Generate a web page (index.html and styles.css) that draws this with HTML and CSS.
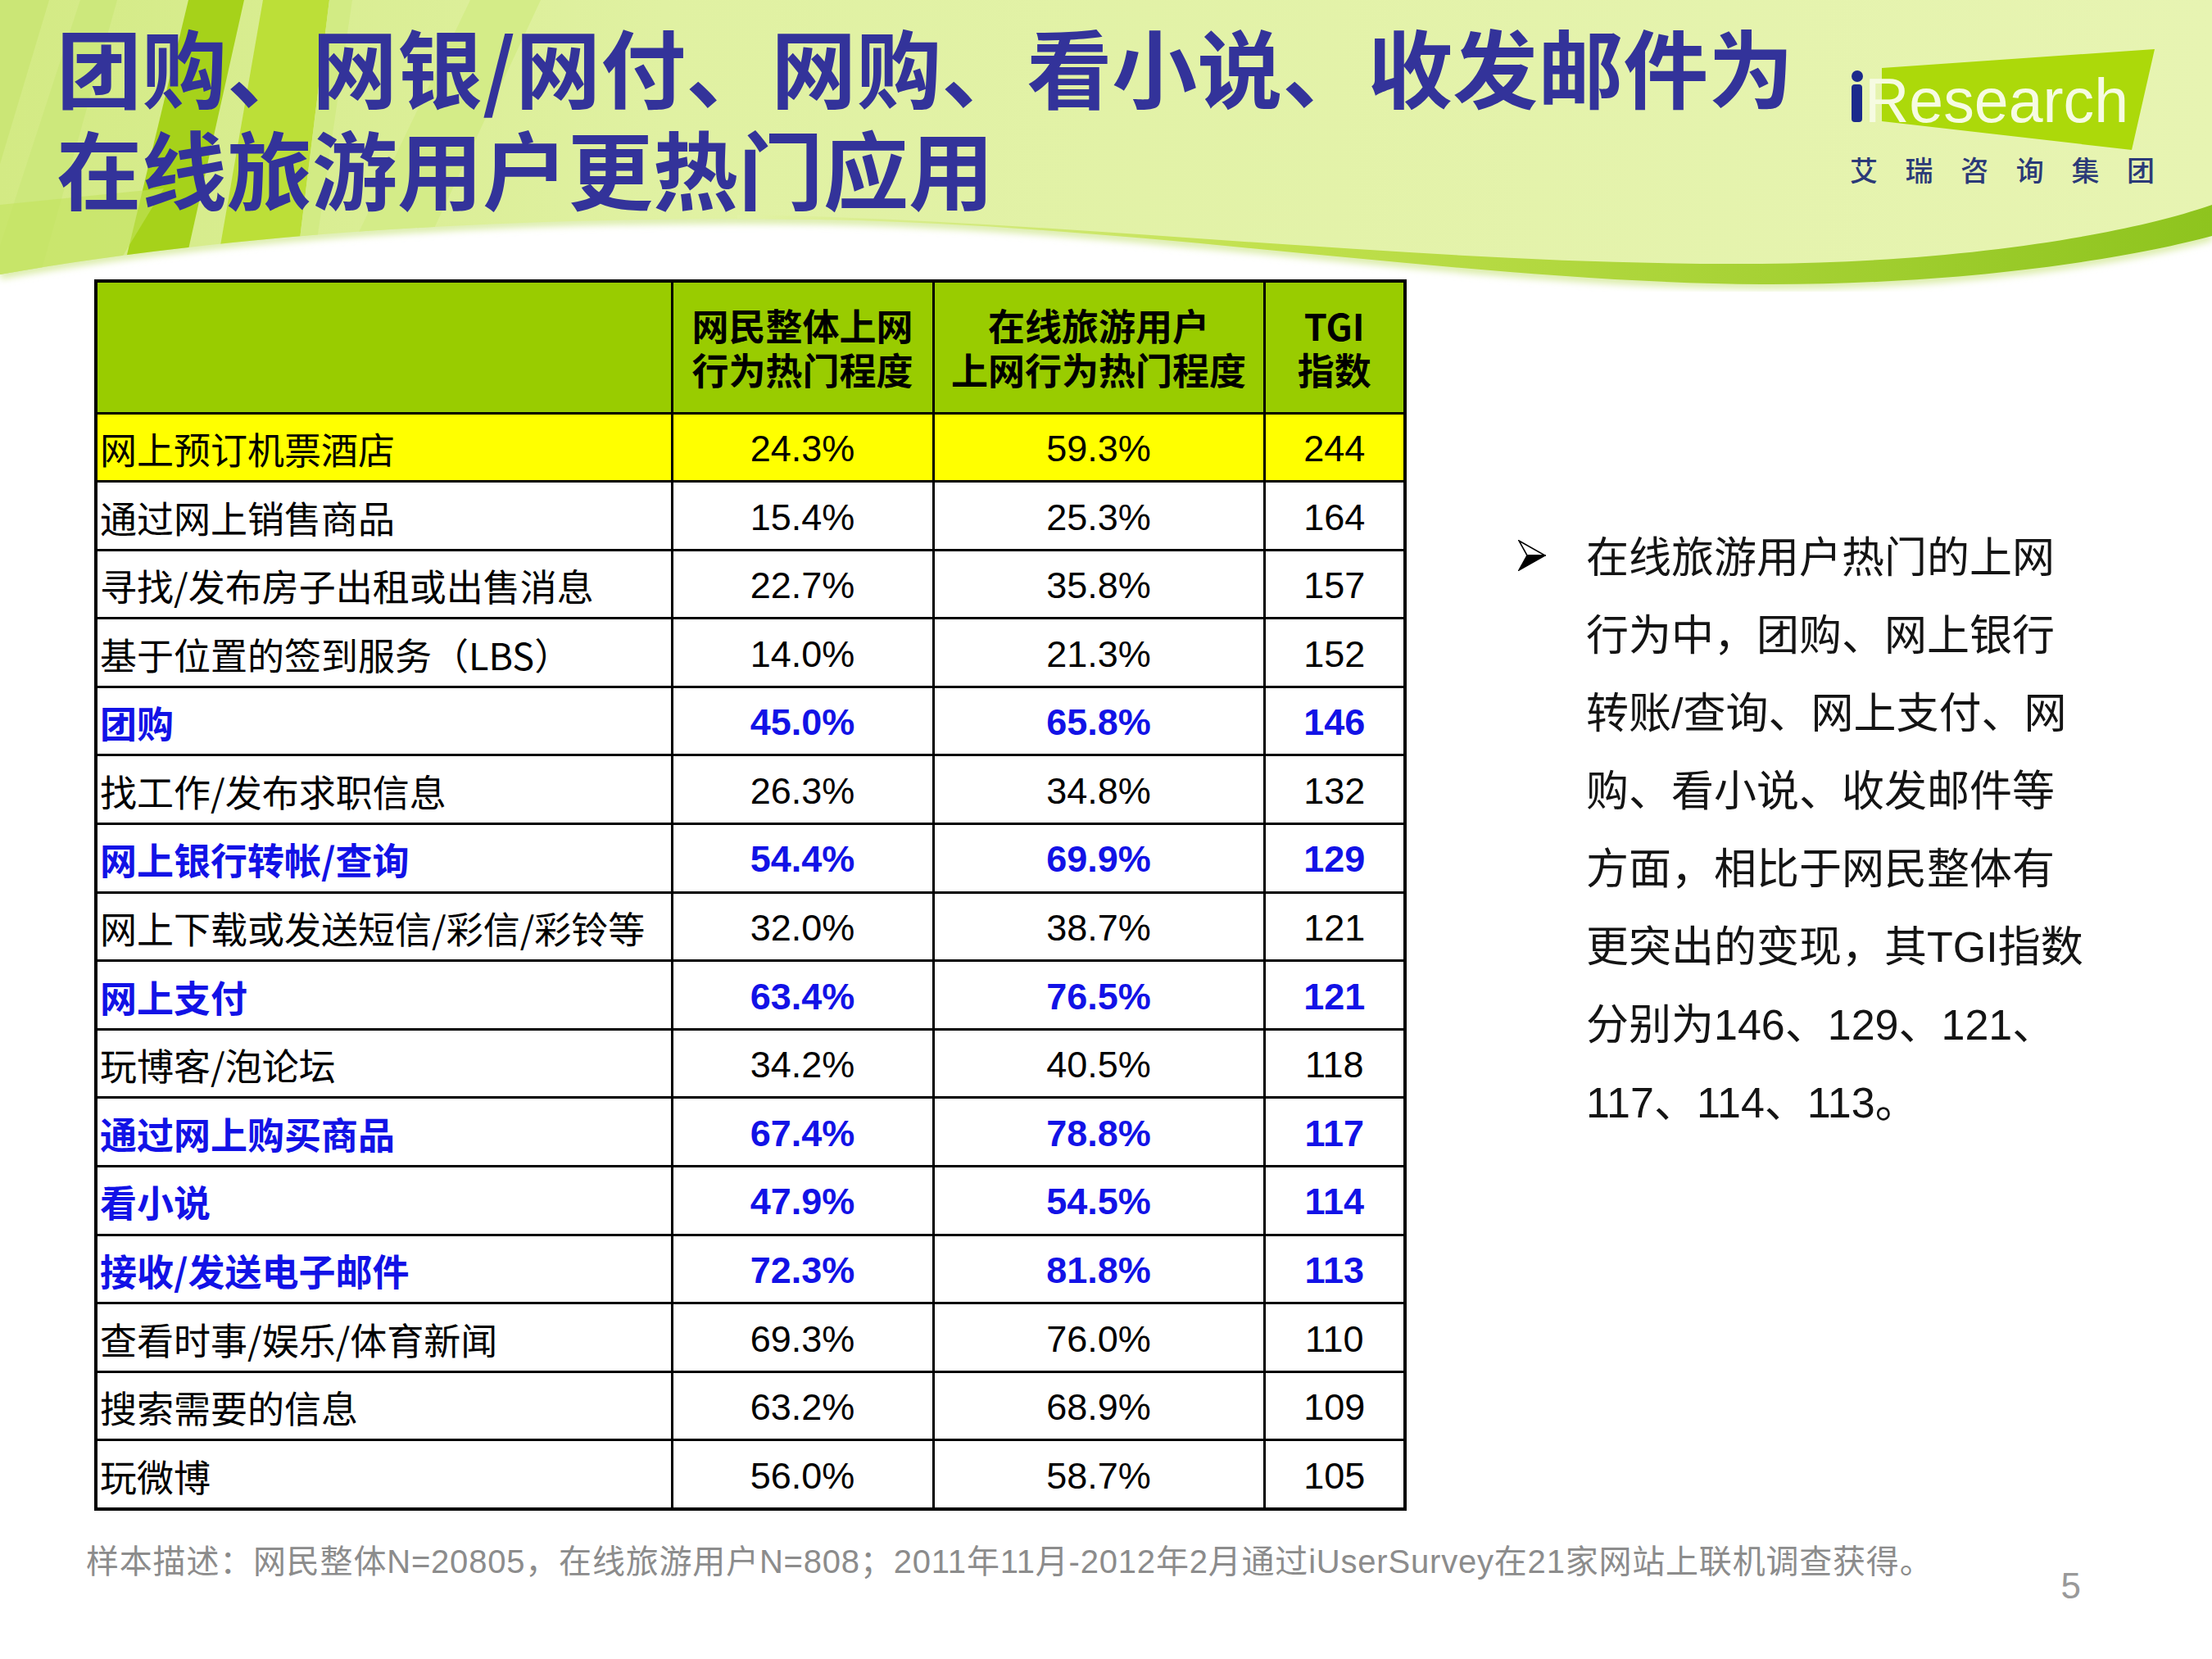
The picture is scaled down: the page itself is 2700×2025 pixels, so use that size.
FILE: index.html
```html
<!DOCTYPE html>
<html lang="zh-CN">
<head>
<meta charset="utf-8">
<title>团购、网银/网付、网购、看小说、收发邮件为在线旅游用户更热门应用</title>
<link rel="stylesheet" href="styles.css">
</head>
<body>
<div class="page">
  <svg class="bg" viewBox="0 0 2700 380" width="2700" height="380" aria-hidden="true">
    <defs>
      <linearGradient id="sky" x1="0" y1="0" x2="1" y2="0">
        <stop offset="0" stop-color="#d3ea84"/>
        <stop offset="0.3" stop-color="#e0f1a2"/>
        <stop offset="1" stop-color="#e7f4b2"/>
      </linearGradient>
      <linearGradient id="band" x1="900" y1="0" x2="2700" y2="0" gradientUnits="userSpaceOnUse">
        <stop offset="0" stop-color="#e2f2a6"/>
        <stop offset="0.35" stop-color="#c2e14e"/>
        <stop offset="1" stop-color="#8ec41e"/>
      </linearGradient>
      <clipPath id="sk">
        <path d="M0,0 H2700 V288 C2600,315 2400,348 2150,347 C1800,345 1400,275 1000,268 C600,262 250,290 0,335 Z"/>
      </clipPath>
      <filter id="soft"><feGaussianBlur stdDeviation="5"/></filter>
    </defs>
    <path d="M0,335 C250,290 600,262 1000,268 C1400,275 1800,345 2150,347 C2400,348 2600,315 2700,288" fill="none" stroke="#d4e99a" stroke-width="10" filter="url(#soft)"/>
    <path fill="url(#sky)" d="M0,0 H2700 V288 C2600,315 2400,348 2150,347 C1800,345 1400,275 1000,268 C600,262 250,290 0,335 Z"/>
    <g clip-path="url(#sk)">
      <polygon points="0,0 60,0 0,200" fill="#cbe676"/>
      <polygon points="98,0 143,0 45,350 0,350 0,300" fill="#cde87c"/>
      <polygon points="230,0 298,0 222,340 148,340" fill="#a6d21a"/>
      <polygon points="321,0 402,0 360,340 262,340" fill="#bcdf38"/>
      <polygon points="402,0 430,0 380,340 360,340" fill="#d2eb84"/>
      <polygon points="574,0 660,0 520,300 430,300" fill="#d4ec88"/>
      <polygon points="0,250 200,230 130,345 0,345" fill="#c3e25e" opacity="0.6"/>
      <path fill="url(#band)" d="M900,262 C1300,268 1750,325 2150,322 C2400,320 2600,285 2700,250 V380 H900 Z"/>
    </g>
  </svg>

  <header class="top">
    <h1 class="title"><span class="tl">团购、网银/网付、网购、看小说、收发邮件为</span><span class="tl">在线旅游用户更热门应用</span></h1>
    <svg class="logo" viewBox="0 0 380 175" width="380" height="175" aria-label="iResearch 艾瑞咨询集团">
      <polygon points="42,28 375,5 347,128 42,93" fill="#acd90a"/>
      <circle cx="12" cy="38" r="7" fill="#1c2a8c"/>
      <rect x="5" y="48" width="13" height="46" rx="4" fill="#1c2a8c"/>
      <text class="logo-en" x="21" y="94" textLength="322" lengthAdjust="spacingAndGlyphs">Research</text>
      <text class="logo-cn" x="3" y="166" textLength="372" lengthAdjust="spacing">艾瑞咨询集团</text>
    </svg>
  </header>

  <main class="main">
    <table class="data">
      <colgroup>
        <col class="c-name"><col class="c-all"><col class="c-travel"><col class="c-tgi">
      </colgroup>
      <thead>
        <tr class="head">
          <th></th>
          <th>网民整体上网<br>行为热门程度</th>
          <th>在线旅游用户<br>上网行为热门程度</th>
          <th>TGI<br>指数</th>
        </tr>
      </thead>
      <tbody>
        <tr class="hl"><td>网上预订机票酒店</td><td>24.3%</td><td>59.3%</td><td>244</td></tr>
        <tr><td>通过网上销售商品</td><td>15.4%</td><td>25.3%</td><td>164</td></tr>
        <tr><td>寻找/发布房子出租或出售消息</td><td>22.7%</td><td>35.8%</td><td>157</td></tr>
        <tr><td>基于位置的签到服务（LBS）</td><td>14.0%</td><td>21.3%</td><td>152</td></tr>
        <tr class="blue"><td>团购</td><td>45.0%</td><td>65.8%</td><td>146</td></tr>
        <tr><td>找工作/发布求职信息</td><td>26.3%</td><td>34.8%</td><td>132</td></tr>
        <tr class="blue"><td>网上银行转帐/查询</td><td>54.4%</td><td>69.9%</td><td>129</td></tr>
        <tr><td>网上下载或发送短信/彩信/彩铃等</td><td>32.0%</td><td>38.7%</td><td>121</td></tr>
        <tr class="blue"><td>网上支付</td><td>63.4%</td><td>76.5%</td><td>121</td></tr>
        <tr><td>玩博客/泡论坛</td><td>34.2%</td><td>40.5%</td><td>118</td></tr>
        <tr class="blue"><td>通过网上购买商品</td><td>67.4%</td><td>78.8%</td><td>117</td></tr>
        <tr class="blue"><td>看小说</td><td>47.9%</td><td>54.5%</td><td>114</td></tr>
        <tr class="blue"><td>接收/发送电子邮件</td><td>72.3%</td><td>81.8%</td><td>113</td></tr>
        <tr><td>查看时事/娱乐/体育新闻</td><td>69.3%</td><td>76.0%</td><td>110</td></tr>
        <tr><td>搜索需要的信息</td><td>63.2%</td><td>68.9%</td><td>109</td></tr>
        <tr><td>玩微博</td><td>56.0%</td><td>58.7%</td><td>105</td></tr>
      </tbody>
    </table>

    <div class="notes">
      <svg class="arrow" viewBox="0 0 34 38" width="34" height="38" aria-hidden="true">
        <polygon points="1,1 33,19 11,19" fill="#fff" stroke="#000" stroke-width="1.6" stroke-linejoin="miter"/>
        <polygon points="11,19 33,19 1,37" fill="#000" stroke="#000" stroke-width="1.6"/>
      </svg>
      <p class="note-text">在线旅游用户热门的上网<br>行为中，团购、网上银行<br>转账/查询、网上支付、网<br>购、看小说、收发邮件等<br>方面，相比于网民整体有<br>更突出的变现，其TGI指数<br>分别为146、129、121、<br>117、114、113。</p>
    </div>
  </main>

  <footer class="foot">
    <span class="source">样本描述：网民整体N=20805，在线旅游用户N=808；2011年11月-2012年2月通过iUserSurvey在21家网站上联机调查获得。</span>
    <span class="pg">5</span>
  </footer>
</div>
</body>
</html>
```

FILE: styles.css
```css
html, body {
  margin: 0;
  padding: 0;
  background: #ffffff;
}

.page {
  position: relative;
  width: 2700px;
  height: 2025px;
  overflow: hidden;
  background: #ffffff;
  font-family: "Liberation Sans", "Noto Sans CJK SC", sans-serif;
}

.bg {
  position: absolute;
  top: 0;
  left: 0;
  z-index: 0;
}

.top {
  position: relative;
  z-index: 1;
  display: flex;
  justify-content: space-between;
  align-items: flex-start;
  height: 341px;
  box-sizing: border-box;
  padding: 0 65px 0 69px;
}

.title {
  margin: 18px 0 0 0;
  display: flex;
  flex-direction: column;
  font-family: "Noto Sans CJK SC", sans-serif;
  font-weight: 700;
  font-size: 104px;
  line-height: 124px;
  color: #33339a;
  white-space: nowrap;
  letter-spacing: 0;
}

.tl {
  display: block;
  height: 124px;
}

.logo {
  margin-top: 55px;
  flex: none;
}

.logo-en {
  font-family: "Liberation Sans", sans-serif;
  font-size: 76px;
  fill: #f6fbe2;
}

.logo-cn {
  font-family: "Noto Sans CJK SC", sans-serif;
  font-size: 34px;
  font-weight: 500;
  fill: #2b3a78;
}

.main {
  position: relative;
  z-index: 1;
  display: flex;
  align-items: flex-start;
  padding-left: 115px;
}

.data {
  width: 1598px;
  table-layout: fixed;
  border-collapse: collapse;
  border: 4px solid #000;
  font-size: 45px;
  color: #000;
}

.c-name { width: 703px; }
.c-all { width: 319px; }
.c-travel { width: 404px; }
.c-tgi { width: 172px; }

.data th,
.data td {
  border: 3px solid #000;
  padding: 0 4px;
  text-align: center;
  vertical-align: middle;
  white-space: nowrap;
  line-height: 1.15;
  box-sizing: border-box;
}

.data th {
  height: 161px;
  background: #99cc00;
  font-family: "Noto Sans CJK SC", sans-serif;
  font-weight: 700;
  line-height: 54px;
  padding-top: 0;
}

.data td {
  height: 83.6px;
  padding-top: 4px;
}

.data td:first-child {
  text-align: left;
  padding-left: 3px;
  font-family: "Noto Sans CJK SC", sans-serif;
}

.data .hl td {
  background: #ffff00;
}

.data .blue td {
  color: #1212e6;
  font-weight: 700;
}

.notes {
  display: flex;
  align-items: flex-start;
  margin: 293px 0 0 136px;
}

.arrow {
  flex: none;
  margin-top: 25px;
  width: 34px;
  margin-right: 49px;
}

.note-text {
  margin: 0;
  font-family: "Liberation Sans", "Noto Sans CJK SC", sans-serif;
  font-size: 52px;
  line-height: 95px;
  color: #141414;
  white-space: nowrap;
}

.foot {
  position: relative;
  z-index: 1;
  display: flex;
  justify-content: space-between;
  align-items: flex-start;
  margin-top: 38px;
  padding: 0 160px 0 105px;
  color: #8c8c8c;
}

.source {
  font-size: 40px;
  line-height: 48px;
  letter-spacing: 0.8px;
  white-space: nowrap;
}

.pg {
  margin-top: 26px;
  font-size: 44px;
  line-height: 56px;
  color: #999999;
}
```
